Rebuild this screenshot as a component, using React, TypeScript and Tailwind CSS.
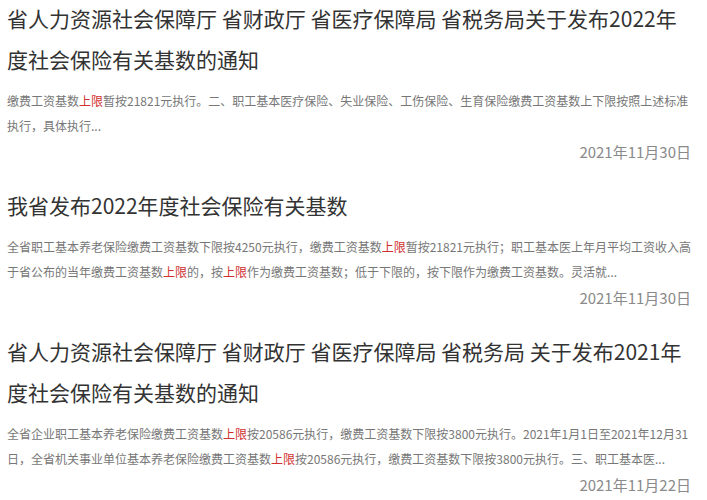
import React from 'react';

type Part = string | { hl: string };

interface Article {
  title: string[];
  summary: Part[][];
  date: string;
}

const articles: Article[] = [
  {
    title: ['省人力资源社会保障厅 省财政厅 省医疗保障局 省税务局关于发布2022年', '度社会保险有关基数的通知'],
    summary: [
      ['缴费工资基数', { hl: '上限' }, '暂按21821元执行。二、职工基本医疗保险、失业保险、工伤保险、生育保险缴费工资基数上下限按照上述标准'],
      ['执行，具体执行...'],
    ],
    date: '2021年11月30日',
  },
  {
    title: ['我省发布2022年度社会保险有关基数'],
    summary: [
      ['全省职工基本养老保险缴费工资基数下限按4250元执行，缴费工资基数', { hl: '上限' }, '暂按21821元执行；职工基本医上年月平均工资收入高'],
      ['于省公布的当年缴费工资基数', { hl: '上限' }, '的，按', { hl: '上限' }, '作为缴费工资基数；低于下限的，按下限作为缴费工资基数。灵活就...'],
    ],
    date: '2021年11月30日',
  },
  {
    title: ['省人力资源社会保障厅 省财政厅 省医疗保障局 省税务局 关于发布2021年', '度社会保险有关基数的通知'],
    summary: [
      ['全省企业职工基本养老保险缴费工资基数', { hl: '上限' }, '按20586元执行，缴费工资基数下限按3800元执行。2021年1月1日至2021年12月31'],
      ['日，全省机关事业单位基本养老保险缴费工资基数', { hl: '上限' }, '按20586元执行，缴费工资基数下限按3800元执行。三、职工基本医...'],
    ],
    date: '2021年11月22日',
  },
];

function ArticleItem({ a }: { a: Article }) {
  return (
    <div className="flex flex-col">
      <h3 className="text-[21px] leading-[41px] text-[#333] font-normal whitespace-nowrap">
        {a.title.map((t, i) => (
          <div key={i}>{t}</div>
        ))}
      </h3>
      <div className="mt-[8px] text-[12px] leading-[25px] text-[#777] whitespace-nowrap">
        {a.summary.map((line, i) => (
          <div key={i}>
            {line.map((p, j) =>
              typeof p === 'string' ? (
                <span key={j}>{p}</span>
              ) : (
                <span key={j} className="text-[#d0302f]">{p.hl}</span>
              )
            )}
          </div>
        ))}
      </div>
      <div className="mt-[4px] pr-[16px] text-right text-[15px] leading-[20px] text-[#8a8a8a]">{a.date}</div>
    </div>
  );
}

export default function App() {
  return (
    <div
      className="w-[707px] h-[500px] overflow-hidden bg-white pl-[7px] mt-[-2px] flex flex-col gap-[23px]"
      style={{ fontFamily: '"Noto Sans CJK SC", "Noto Sans", sans-serif' }}
    >
      {articles.map((a, i) => (
        <ArticleItem key={i} a={a} />
      ))}
    </div>
  );
}
